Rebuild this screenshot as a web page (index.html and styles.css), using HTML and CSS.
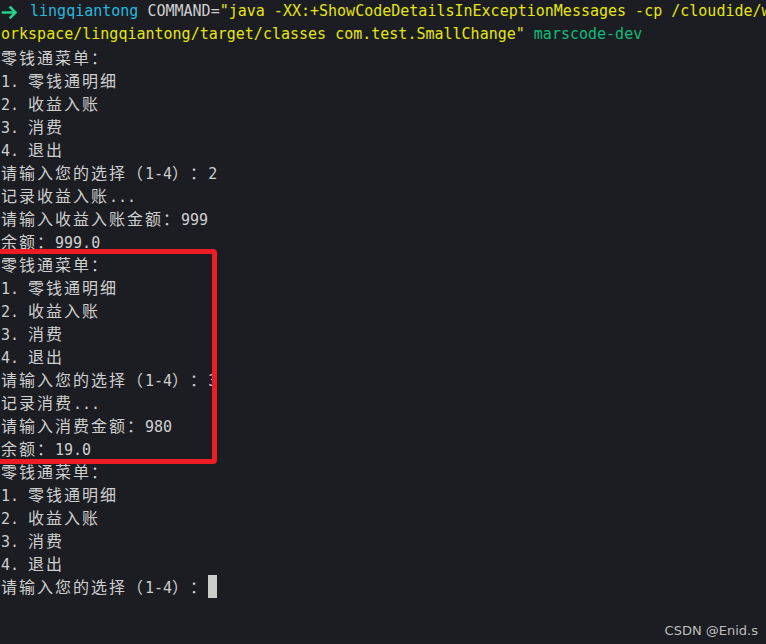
FILE: index.html
```html
<!DOCTYPE html>
<html>
<head>
<meta charset="utf-8">
<link rel="stylesheet" href="styles.css">
</head>
<body>
<div class="term">
  <div class="ln"><svg class="arrow" width="20" height="23" viewBox="0 0 20 23"><path d="M2 12.5H14M9.5 7.5L14.5 12.5L9.5 17.5" fill="none" stroke="#23d18b" stroke-width="2.6" stroke-linecap="square"/></svg> <span class="cyan">lingqiantong</span> COMMAND=<span class="yel">"java -XX:+ShowCodeDetailsInExceptionMessages -cp /cloudide/w</span></div>
  <div class="ln"><span class="yel">orkspace/lingqiantong/target/classes com.test.SmallChange"</span> <span class="grn">marscode-dev</span></div>
  <div class="ln"><span class="w">零钱通菜单：</span></div>
  <div class="ln">1. <span class="w">零钱通明细</span></div>
  <div class="ln">2. <span class="w">收益入账</span></div>
  <div class="ln">3. <span class="w">消费</span></div>
  <div class="ln">4. <span class="w">退出</span></div>
  <div class="ln"><span class="w">请输入您的选择（</span>1-4<span class="w">）：</span>2</div>
  <div class="ln"><span class="w">记录收益入账</span>...</div>
  <div class="ln"><span class="w">请输入收益入账金额：</span>999</div>
  <div class="ln"><span class="w">余额：</span>999.0</div>
  <div class="ln"><span class="w">零钱通菜单：</span></div>
  <div class="ln">1. <span class="w">零钱通明细</span></div>
  <div class="ln">2. <span class="w">收益入账</span></div>
  <div class="ln">3. <span class="w">消费</span></div>
  <div class="ln">4. <span class="w">退出</span></div>
  <div class="ln"><span class="w">请输入您的选择（</span>1-4<span class="w">）：</span>3</div>
  <div class="ln"><span class="w">记录消费</span>...</div>
  <div class="ln"><span class="w">请输入消费金额：</span>980</div>
  <div class="ln"><span class="w">余额：</span>19.0</div>
  <div class="ln"><span class="w">零钱通菜单：</span></div>
  <div class="ln">1. <span class="w">零钱通明细</span></div>
  <div class="ln">2. <span class="w">收益入账</span></div>
  <div class="ln">3. <span class="w">消费</span></div>
  <div class="ln">4. <span class="w">退出</span></div>
  <div class="ln"><span class="w">请输入您的选择（</span>1-4<span class="w">）：</span><span class="cursor"></span></div>
  <div class="highlight"></div>
</div>
<div class="mark">CSDN @Enid.s</div>
</body>
</html>
```

FILE: styles.css
```css
html, body {
  margin: 0;
  padding: 0;
  background: #1c1d23;
  width: 766px;
  height: 644px;
  overflow: hidden;
}
.term {
  position: relative;
  font-family: "DejaVu Sans Mono", "Liberation Mono", monospace;
  font-size: 15px;
  line-height: 23px;
  color: #cfcfcf;
  padding-left: 1px;
}
.ln {
  height: 23px;
  white-space: pre;
  overflow: hidden;
}
.w {
  font-family: "Noto Sans CJK SC", sans-serif;
  font-size: 16px;
  letter-spacing: 2px;
  text-spacing-trim: space-all;
  font-feature-settings: "halt" 0, "chws" 0;
}
.arrow {
  display: inline-block;
  vertical-align: top;
}
.cyan { color: #29b8db; }
.yel { color: #e5e510; }
.grn { color: #0dbc79; }
.cursor {
  display: inline-block;
  width: 9px;
  height: 23px;
  background: #cccccc;
  vertical-align: top;
}
.highlight {
  position: absolute;
  left: -6px;
  top: 249px;
  width: 213px;
  height: 205px;
  border: 5px solid #ee1c25;
  border-radius: 4px;
}
.mark {
  position: absolute;
  right: 8px;
  bottom: 6px;
  font-family: "DejaVu Sans", sans-serif;
  font-size: 13px;
  color: #bdbdbd;
}
```
